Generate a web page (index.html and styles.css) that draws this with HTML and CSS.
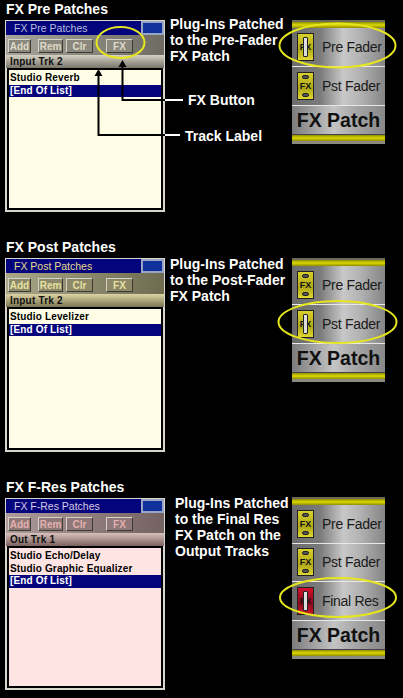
FILE: index.html
```html
<!DOCTYPE html>
<html lang="en">
<head>
    <meta charset="UTF-8">
    <meta name="viewport" content="width=device-width, initial-scale=1.0">
    <title>FX Patches</title>
    <link rel="stylesheet" href="styles.css">
</head>
<body>
    <!-- FX Pre -->
    <section class="block pre">
        <h2>FX Pre Patches</h2>
        <div class="row">
            <div class="window">
                <div class="titlebar"><span>FX Pre Patches</span><i class="minimize"></i></div>
                <div class="toolbar">
                    <button class="add">Add</button>
                    <button class="rem">Rem</button>
                    <button class="clr">Clr</button>
                    <button class="fx">FX</button>
                </div>
                <div class="track">Input Trk 2</div>
                <ul class="list">
                    <li>Studio Reverb</li>
                    <li class="selected">[End Of List]</li>
                </ul>
            </div>
            <div class="notes">
                <p>Plug-Ins Patched<br>to the Pre-Fader<br>FX Patch</p>
                <p class="callout callout-fx">FX Button</p>
                <p class="callout callout-track">Track Label</p>
            </div>
            <div class="panel">
                <div class="slot"><span class="icon on">FX</span><span>Pre Fader</span></div>
                <div class="slot"><span class="icon">FX</span><span>Pst Fader</span></div>
                <div class="panel-name">FX Patch</div>
            </div>
        </div>
        <svg class="overlay" width="403" height="150" viewBox="0 0 403 150">
            <ellipse cx="120.5" cy="42.5" rx="24" ry="15.5" fill="none" stroke="#e6e61e" stroke-width="2"/>
            <ellipse cx="337.5" cy="45.5" rx="58" ry="22" fill="none" stroke="#e6e61e" stroke-width="2"/>
            <path d="M122.5 66V100H165" fill="none" stroke="#000" stroke-width="2"/>
            <path d="M98.5 75V135H165" fill="none" stroke="#000" stroke-width="2"/>
            <path d="M165 100H183M165 135H180" fill="none" stroke="#fff" stroke-width="2"/>
            <path d="M122.5 60l-4 7h8zM98.5 69l-4 7h8z" fill="#000"/>
        </svg>
    </section>

    <!-- FX Post -->
    <section class="block post">
        <h2>FX Post Patches</h2>
        <div class="row">
            <div class="window">
                <div class="titlebar"><span>FX Post Patches</span><i class="minimize"></i></div>
                <div class="toolbar">
                    <button class="add">Add</button>
                    <button class="rem">Rem</button>
                    <button class="clr">Clr</button>
                    <button class="fx">FX</button>
                </div>
                <div class="track">Input Trk 2</div>
                <ul class="list">
                    <li>Studio Levelizer</li>
                    <li class="selected">[End Of List]</li>
                </ul>
            </div>
            <div class="notes">
                <p>Plug-Ins Patched<br>to the Post-Fader<br>FX Patch</p>
            </div>
            <div class="panel">
                <div class="slot"><span class="icon">FX</span><span>Pre Fader</span></div>
                <div class="slot"><span class="icon on">FX</span><span>Pst Fader</span></div>
                <div class="panel-name">FX Patch</div>
            </div>
        </div>
        <svg class="overlay" width="403" height="150" viewBox="0 0 403 150">
            <ellipse cx="337.5" cy="82" rx="59" ry="21" fill="none" stroke="#e6e61e" stroke-width="2"/>
        </svg>
    </section>

    <!-- FX F-Res -->
    <section class="block fres">
        <h2>FX F-Res Patches</h2>
        <div class="row">
            <div class="window">
                <div class="titlebar"><span>FX F-Res Patches</span><i class="minimize"></i></div>
                <div class="toolbar">
                    <button class="add">Add</button>
                    <button class="rem">Rem</button>
                    <button class="clr">Clr</button>
                    <button class="fx">FX</button>
                </div>
                <div class="track">Out Trk 1</div>
                <ul class="list">
                    <li>Studio Echo/Delay</li>
                    <li>Studio Graphic Equalizer</li>
                    <li class="selected">[End Of List]</li>
                </ul>
            </div>
            <div class="notes">
                <p>Plug-Ins Patched<br>to the Final Res<br>FX Patch on the<br>Output Tracks</p>
            </div>
            <div class="panel">
                <div class="slot"><span class="icon">FX</span><span>Pre Fader</span></div>
                <div class="slot"><span class="icon">FX</span><span>Pst Fader</span></div>
                <div class="slot"><span class="icon on red">FX</span><span>Final Res</span></div>
                <div class="panel-name">FX Patch</div>
            </div>
        </div>
        <svg class="overlay" width="403" height="150" viewBox="0 0 403 150">
            <ellipse cx="338" cy="117.5" rx="58" ry="19.5" fill="none" stroke="#e6e61e" stroke-width="2"/>
        </svg>
    </section>
</body>
</html>
```

FILE: styles.css
```css
body {
    margin: 0;
    width: 403px;
    height: 698px;
    overflow: hidden;
    background: #000;
    color: #fff;
    font-family: "Liberation Sans", Arial, sans-serif;
}
p {
    margin: 0;
}
.block {
    position: relative;
    padding-left: 5px;
}
.pre {
    height: 238px;
    padding-top: 2px;
    --tint-a: #a8a59c;
    --tint-b: #6e6b62;
    --btn: #8a877c;
    --btn-text: #dedac8;
    --title: #b4bcdc;
    --label-a: #d6d2c4;
    --label-b: #77746a;
    --paper: #fffde6;
}
.post {
    height: 240px;
    --tint-a: #aaa68a;
    --tint-b: #6f6b50;
    --btn: #8c8868;
    --btn-text: #e6e0a0;
    --title: #e8dc8c;
    --label-a: #dcd4a4;
    --label-b: #7a7452;
    --paper: #fffde6;
}
.fres {
    --tint-a: #ae9c9c;
    --tint-b: #746262;
    --btn: #8e7878;
    --btn-text: #e4b0b0;
    --title: #d8c8e0;
    --label-a: #d8c0bc;
    --label-b: #7c625f;
    --paper: #ffe4e4;
}
h2 {
    margin: 0 0 3px 1px;
    font-size: 14px;
    line-height: 15px;
    font-weight: bold;
}
.row {
    display: flex;
    align-items: flex-start;
}
.overlay {
    position: absolute;
    left: 0;
    top: 0;
    pointer-events: none;
}

/* patch window */
.window {
    box-sizing: border-box;
    width: 160px;
    height: 192px;
    display: flex;
    flex-direction: column;
    border: 1px solid #d8d6cc;
    background: #d8d6cc;
}
.post .window {
    height: 194px;
}
.titlebar {
    display: flex;
    align-items: center;
    justify-content: space-between;
    height: 14px;
    padding-left: 8px;
    background: #04047c;
    color: var(--title);
    font-size: 10.5px;
}
.minimize {
    box-sizing: border-box;
    width: 23px;
    height: 14px;
    background: #10309c;
    border: 2px solid #98a4c4;
}
.toolbar {
    display: flex;
    align-items: flex-end;
    height: 20px;
    padding-left: 2px;
    background: linear-gradient(90deg, var(--tint-a), var(--tint-b));
}
.post .toolbar {
    height: 21px;
}
.toolbar button {
    box-sizing: border-box;
    height: 14px;
    margin: 0 0 2px;
    padding: 0;
    border: 1px solid;
    border-color: #d6d4c8 #3c3a34 #3c3a34 #d6d4c8;
    background: var(--btn);
    color: var(--btn-text);
    font: bold 10px "Liberation Sans", Arial, sans-serif;
}
.add {
    width: 23px;
}
.rem {
    width: 25px;
    margin-left: 7px !important;
}
.clr {
    width: 27px;
    margin-left: 3px !important;
}
.fx {
    width: 27px;
    margin-left: 13px !important;
}
.track {
    height: 13px;
    padding-left: 4px;
    background: linear-gradient(var(--label-a), var(--label-b));
    color: #111;
    font-size: 10px;
    font-weight: bold;
    line-height: 13px;
    letter-spacing: 0.2px;
}
.list {
    flex: 1;
    margin: 0 1px 1px;
    padding: 2px 0 0;
    list-style: none;
    border: 2px solid #000;
    background: var(--paper);
    color: #000;
    font-size: 10px;
    font-weight: bold;
    letter-spacing: 0.15px;
}
.list li {
    height: 12.5px;
    line-height: 12.5px;
    padding-left: 1px;
}
.list .selected {
    background: #04047c;
    color: #fff;
}

/* captions */
.notes {
    box-sizing: border-box;
    width: 122px;
    margin-top: -2px;
    padding: 0 0 0 5px;
    font-size: 14px;
    font-weight: bold;
    line-height: 16px;
    white-space: nowrap;
}
.pre .notes {
    margin-top: -4px;
}
.fres .notes {
    margin-top: -3px;
    padding-left: 10px;
}
.callout {
    position: absolute;
    left: 188px;
    top: 92px;
}
.callout-track {
    left: 185px;
    top: 128px;
}

/* fader panel */
.panel {
    box-sizing: border-box;
    width: 93px;
    margin-left: 5px;
    padding: 2px 0 3px;
    background: linear-gradient(#6a6a5a, #8a8a80);
    display: flex;
    flex-direction: column;
    color: #1a1a1a;
}
.fres .panel {
    margin-top: -1px;
}
.panel::before,
.panel::after {
    content: "";
    display: block;
    flex: none;
    height: 6px;
    background: linear-gradient(#8f8c00, #dcd800 50%, #8f8c00);
}
.slot {
    display: flex;
    align-items: center;
    gap: 8px;
    box-sizing: border-box;
    height: 39px;
    padding-left: 5px;
    border-bottom: 1px solid #e8e8e8;
    background: linear-gradient(90deg, #6c6c6c 0%, #7a7a7a 30%, #c8c8c8 55%, #b4b4b4 72%, #858585 100%);
    font-size: 14px;
    letter-spacing: -0.3px;
    white-space: nowrap;
}
.fres .slot {
    height: 38.5px;
}
.icon {
    position: relative;
    box-sizing: border-box;
    flex: none;
    width: 17px;
    height: 28px;
    border: 1px solid #222;
    background: linear-gradient(#d8d02c, #b0a818 60%, #e0d830);
    color: #111;
    font-size: 9px;
    font-weight: bold;
    line-height: 26px;
    text-align: center;
    letter-spacing: 0;
}
.icon::before,
.icon::after {
    content: "";
    position: absolute;
    left: 4px;
    width: 7px;
    height: 4px;
    border-radius: 2px;
    background: #555;
    border: 1px solid #222;
    box-sizing: border-box;
}
.icon::before {
    top: 2px;
}
.icon::after {
    bottom: 2px;
}
.icon.on::before {
    top: 3px;
    left: 5px;
    width: 5px;
    height: 20px;
    border-radius: 1px;
    background: #ddd;
    z-index: 1;
}
.icon.on::after {
    display: none;
}
.icon.red {
    background: linear-gradient(#d0102c, #8c0a1c 60%, #c8142c);
}
.panel-name {
    box-sizing: border-box;
    height: 29px;
    background: linear-gradient(90deg, #7c7c7c, #c4c4c4 45%, #a4a4a4 70%, #888);
    border-bottom: 1px solid #444;
    color: #111;
    font-size: 19.5px;
    font-weight: bold;
    line-height: 28px;
    text-align: center;
    white-space: nowrap;
}
```
